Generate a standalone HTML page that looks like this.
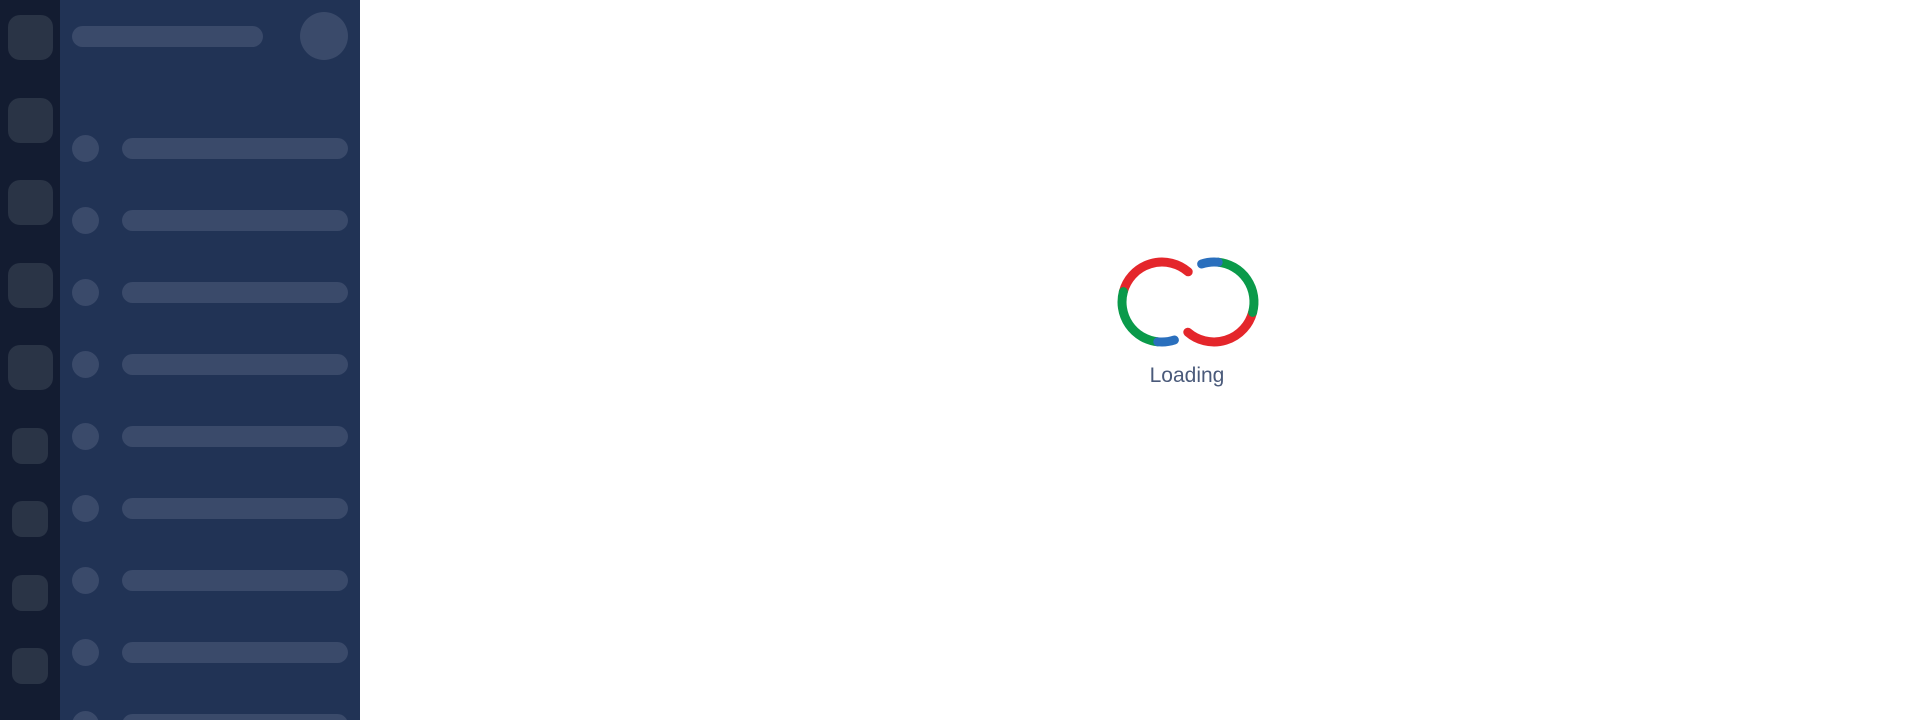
<!DOCTYPE html>
<html><head><style>
html,body{margin:0;padding:0;overflow:hidden;width:1920px;height:720px}
#w{position:relative;width:1920px;height:720px;overflow:hidden;background:#fff;font-family:"Liberation Sans",sans-serif}
.rail{position:absolute;left:0;top:0;width:60px;height:720px;background:#131c31}
.panel{position:absolute;left:60px;top:0;width:300px;height:720px;background:#213355}
.sq{position:absolute;background:#2a3446}
.b{position:absolute;background:#3a4a6a;border-radius:11px}
.c{position:absolute;background:#3a4a6a;border-radius:50%}
</style></head><body><div id="w">
<div class="rail">
<div class="sq" style="left:8px;top:15px;width:45px;height:45px;border-radius:12px"></div>
<div class="sq" style="left:8px;top:98px;width:45px;height:45px;border-radius:12px"></div>
<div class="sq" style="left:8px;top:180px;width:45px;height:45px;border-radius:12px"></div>
<div class="sq" style="left:8px;top:263px;width:45px;height:45px;border-radius:12px"></div>
<div class="sq" style="left:8px;top:345px;width:45px;height:45px;border-radius:12px"></div>
<div class="sq" style="left:12px;top:428px;width:36px;height:36px;border-radius:10px"></div>
<div class="sq" style="left:12px;top:501px;width:36px;height:36px;border-radius:10px"></div>
<div class="sq" style="left:12px;top:575px;width:36px;height:36px;border-radius:10px"></div>
<div class="sq" style="left:12px;top:648px;width:36px;height:36px;border-radius:10px"></div>
</div>
<div class="panel"></div>
<div class="b" style="left:72px;top:26px;width:191px;height:21px"></div>
<div class="c" style="left:300px;top:12px;width:48px;height:48px"></div>
<div class="c" style="left:72px;top:135px;width:27px;height:27px"></div><div class="b" style="left:122px;top:138px;width:226px;height:21px"></div>
<div class="c" style="left:72px;top:207px;width:27px;height:27px"></div><div class="b" style="left:122px;top:210px;width:226px;height:21px"></div>
<div class="c" style="left:72px;top:279px;width:27px;height:27px"></div><div class="b" style="left:122px;top:282px;width:226px;height:21px"></div>
<div class="c" style="left:72px;top:351px;width:27px;height:27px"></div><div class="b" style="left:122px;top:354px;width:226px;height:21px"></div>
<div class="c" style="left:72px;top:423px;width:27px;height:27px"></div><div class="b" style="left:122px;top:426px;width:226px;height:21px"></div>
<div class="c" style="left:72px;top:495px;width:27px;height:27px"></div><div class="b" style="left:122px;top:498px;width:226px;height:21px"></div>
<div class="c" style="left:72px;top:567px;width:27px;height:27px"></div><div class="b" style="left:122px;top:570px;width:226px;height:21px"></div>
<div class="c" style="left:72px;top:639px;width:27px;height:27px"></div><div class="b" style="left:122px;top:642px;width:226px;height:21px"></div>
<div class="c" style="left:72px;top:711px;width:27px;height:27px"></div><div class="b" style="left:122px;top:714px;width:226px;height:21px"></div>
<svg style="position:absolute;left:0;top:0" width="1920" height="720" fill="none" stroke-width="9" stroke-linecap="round">
<path d="M1188.2,271.8 A40,40 0 0 0 1123.4,291.6" stroke="#e4262b"/>
<path d="M1123.4,291.6 A40,40 0 0 0 1157.8,341.8" stroke="#0a9a4a"/>
<path d="M1157.8,341.8 A40,40 0 0 0 1174.4,340" stroke="#2a6fbd"/>
<path d="M1187.8,332.2 A40,40 0 0 0 1252.6,312.4" stroke="#e4262b"/>
<path d="M1252.6,312.4 A40,40 0 0 0 1218.2,262.2" stroke="#0a9a4a"/>
<path d="M1218.2,262.2 A40,40 0 0 0 1201.6,264" stroke="#2a6fbd"/>
</svg>
<div style="position:absolute;left:1087px;width:200px;top:364px;text-align:center;font-size:21px;color:#4a5a7a">Loading</div>
</div></body></html>
